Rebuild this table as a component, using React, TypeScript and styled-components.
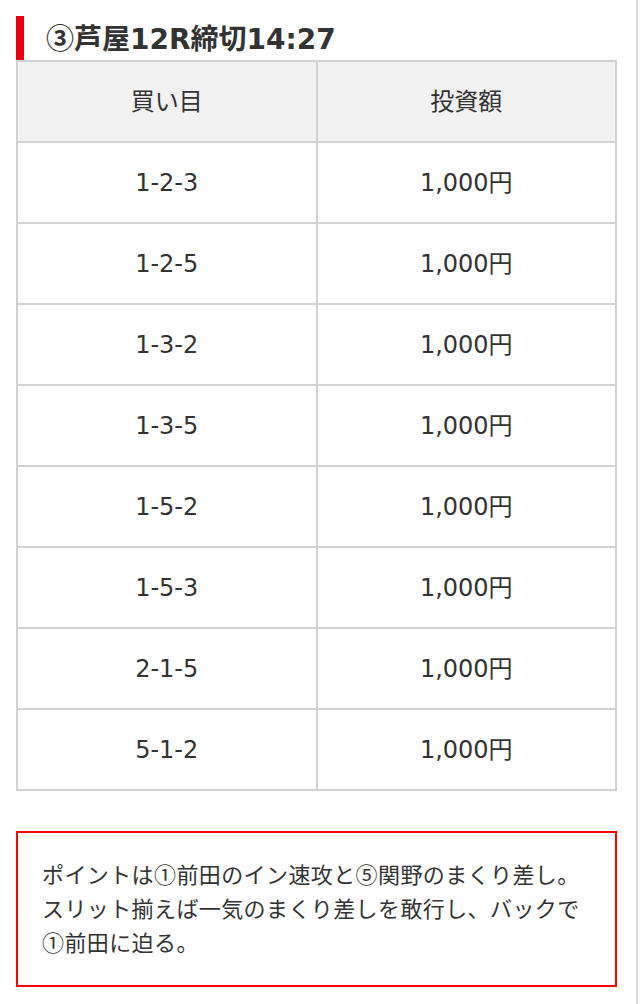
import React from "react";
import styled, { createGlobalStyle } from "styled-components";

const Global = createGlobalStyle`
  html, body { margin: 0; padding: 0; background: #fff; }
  body {
    font-family: "DejaVu Sans", "Noto Sans CJK JP", sans-serif;
    color: #333;
  }
  * { box-sizing: border-box; }
`;

const Page = styled.div`
  width: 638px;
  min-height: 1004px;
  border-right: 2px solid #dcdcdc;
  padding: 16px 20px 16px 16px;
`;

const Heading = styled.h3`
  margin: 0;
  height: 44px;
  display: flex;
  align-items: center;
  border-left: 8px solid #e60012;
  padding-left: 22px;
  font-size: 28px;
  line-height: 34px;
  font-weight: 700;
  color: #333;
`;

const Circled = styled.span`
  font-family: "Noto Sans CJK JP", sans-serif;
`;

const Table = styled.table`
  width: 601px;
  border-collapse: collapse;
  table-layout: fixed;
  border: 2px solid #d2d2d2;
`;

const Cell = styled.td<{ $head?: boolean }>`
  border: 2px solid #d2d2d2;
  height: 81px;
  padding: 0;
  text-align: center;
  vertical-align: middle;
  font-size: 24px;
  line-height: 30px;
  font-weight: 400;
  color: #333;
  background: ${(p) => (p.$head ? "#f2f2f2" : "#fff")};
`;

const Note = styled.div`
  margin-top: 40px;
  width: 601px;
  border: 2px solid #f00;
  padding: 23px 24px 27px 24px;
  font-family: "Noto Sans CJK JP", sans-serif;
  font-size: 22px;
  letter-spacing: 0.4px;
  line-height: 34px;
  color: #333;
`;

const rows = ["1-2-3", "1-2-5", "1-3-2", "1-3-5", "1-5-2", "1-5-3", "2-1-5", "5-1-2"];

export default function App() {
  return (
    <>
      <Global />
      <Page>
        <Heading>
          <span>
            <Circled>③</Circled>芦屋12R締切14:27
          </span>
        </Heading>
        <Table>
          <tbody>
            <tr>
              <Cell as="th" $head>買い目</Cell>
              <Cell as="th" $head>投資額</Cell>
            </tr>
            {rows.map((r) => (
              <tr key={r}>
                <Cell>{r}</Cell>
                <Cell>1,000円</Cell>
              </tr>
            ))}
          </tbody>
        </Table>
        <Note>
          ポイントは①前田のイン速攻と⑤関野のまくり差し。スリット揃えば一気のまくり差しを敢行し、バックで①前田に迫る。
        </Note>
      </Page>
    </>
  );
}
